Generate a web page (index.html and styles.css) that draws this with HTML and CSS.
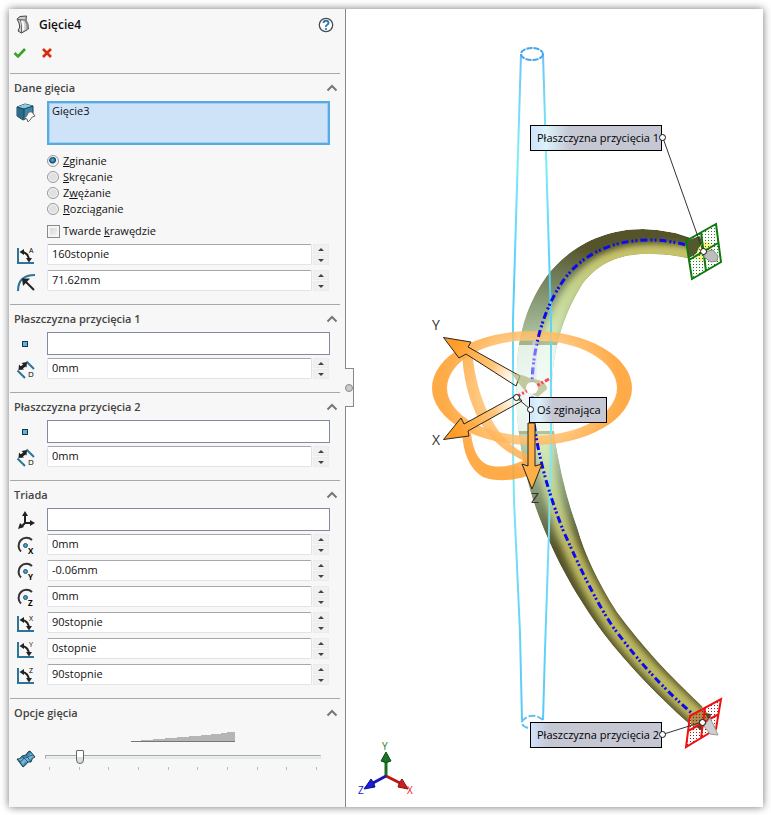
FILE: index.html
```html
<!DOCTYPE html>
<html lang="pl">
<head>
    <meta charset="UTF-8">
    <meta name="viewport" content="width=device-width, initial-scale=1.0">
    <title>Gięcie4</title>
    <link rel="stylesheet" href="styles.css">
</head>
<body>

<!-- Shared icons -->
<svg class="sprite" aria-hidden="true">
    <symbol id="chevron" viewBox="0 0 12 8">
        <path d="M1.500 6.500 6 2l4.500 4.500" fill="none" stroke="#777" stroke-width="2"/>
    </symbol>
    <symbol id="angle" viewBox="0 0 20 20">
        <path d="M2 3v15h16" fill="none" stroke="#2d7596" stroke-width="2"/>
        <path d="M6 7q7 1 7 9" fill="none" stroke="#222" stroke-width="2"/>
        <path d="M3.500 7 8 4v6zM10 13h6l-3 4.500z" fill="#222"/>
    </symbol>
    <symbol id="point" viewBox="0 0 20 20">
        <rect x="6.500" y="7.500" width="5" height="5" fill="#62b2dc" stroke="#123c56"/>
    </symbol>
    <symbol id="distance" viewBox="0 0 20 20">
        <path d="M10.500 2.500 18 10M1.500 11.500 9 19" stroke="#2d7596" stroke-width="2"/>
        <path d="M5 9 9 6" stroke="#222" stroke-width="3"/>
        <path d="M5.500 4 11 3l-.5 5.500zM3 5.500 2.500 11 8 10.500z" fill="#222"/>
    </symbol>
    <symbol id="center" viewBox="0 0 20 20">
        <path d="M5 16.500A7.500 7.500 0 0 1 16 5" fill="none" stroke="#333" stroke-width="2"/>
        <circle cx="9.500" cy="10.500" r="2" fill="#4a9cc4" stroke="#1d5878"/>
    </symbol>
</svg>

<div class="window">
    <aside class="panel">
        <header class="panel-header">
            <div class="title-row">
                <svg class="title-icon" viewBox="0 0 18 20">
                    <path d="M2 4 5 1.500 11.500 1 11 5q2 3 2.500 9l-7 4-3.500-2q3-4 1-8z" fill="#ccc" stroke="#444"/>
                    <path d="M3 4.500 10 5M10 5q3 4 2.500 10M6.500 18V14q1-4-1-9" fill="none" stroke="#666"/>
                    <path d="M11.500 1q-1 4 2 8v5l-2 1q1-7-1.500-10z" fill="#888"/>
                    <path d="M6 6h2q2 3 1 9l-2 1q1-5-1-10z" fill="#fafafa"/>
                </svg>
                <h1>Gięcie4</h1>
                <button class="icon-button help" type="button" aria-label="Pomoc">
                    <svg width="16" height="16" viewBox="0 0 16 16">
                        <circle cx="8" cy="8" r="6.700" fill="#fff" stroke="#444d54" stroke-width="1.300"/>
                        <path d="M5.500 6q.2-2.200 2.500-2.200T10.500 6Q10.500 7.200 9 8T8 10" fill="none" stroke="#2d7ba5" stroke-width="1.900"/>
                        <circle cx="8" cy="12" r="1.100" fill="#2d7ba5"/>
                    </svg>
                </button>
            </div>
            <div class="actions">
                <button class="icon-button" type="button" aria-label="OK">
                    <svg width="14" height="12" viewBox="0 0 14 12"><path d="M1.500 6 5 9.500 12 2" fill="none" stroke="#3ba226" stroke-width="2.600"/></svg>
                </button>
                <button class="icon-button" type="button" aria-label="Anuluj">
                    <svg width="14" height="12" viewBox="0 0 14 12"><path d="m3 2 8 8M11 2 3 10" stroke="#dc2a0c" stroke-width="2.600"/></svg>
                </button>
            </div>
        </header>

        <section class="section">
            <h2>Dane gięcia <svg class="chevron"><use href="#chevron"/></svg></h2>
            <div class="row">
                <label for="bodies" aria-label="Obiekty do gięcia">
                    <svg class="icon" viewBox="0 0 20 20">
                        <path d="M1 4 9 1l8 2v9l-10 5-6-4z" fill="#3b87a8" stroke="#174257"/>
                        <path d="M1 4 9 1l8 2-9 3z" fill="#8ec9e0"/>
                        <path d="M1 4 8 6v11l-7-4z" fill="#2c6c8b"/>
                        <path d="M1 4 8 6l9-3M8 6v10" fill="none" stroke="#174257"/>
                        <path d="M8 15q3-1 4-5 2-2 4-1l3 4q-3 0-5 4l-2 2-1-3z" fill="#fafafa" stroke="#666"/>
                    </svg>
                </label>
                <textarea id="bodies" class="list selected" readonly>Gięcie3</textarea>
            </div>
            <div class="choices">
                <label><input type="radio" name="mode" checked><span><u>Z</u>ginanie</span></label>
                <label><input type="radio" name="mode"><span><u>S</u>kręcanie</span></label>
                <label><input type="radio" name="mode"><span>Z<u>w</u>ężanie</span></label>
                <label><input type="radio" name="mode"><span><u>R</u>ozciąganie</span></label>
                <label class="hard-edges"><input type="checkbox"><span>Twarde <u>k</u>rawędzie</span></label>
            </div>
            <div class="row">
                <label for="angle-a" aria-label="Kąt">
                    <svg class="icon" viewBox="0 0 20 20"><use href="#angle"/><text x="13" y="8">A</text></svg>
                </label>
                <div class="spinner">
                    <input id="angle-a" type="text" value="160stopnie">
                    <div class="steps"><button type="button" class="up" aria-label="Więcej"></button><button type="button" class="down" aria-label="Mniej"></button></div>
                </div>
            </div>
            <div class="row">
                <label for="radius" aria-label="Promień">
                    <svg class="icon" viewBox="0 0 20 20">
                        <path d="M2 20Q2 4 19 4" fill="none" stroke="#2d7596" stroke-width="2"/>
                        <path d="M18 19 10 11" stroke="#222" stroke-width="2"/>
                        <path d="M6 7.500h8L7 15z" fill="#222"/>
                    </svg>
                </label>
                <div class="spinner">
                    <input id="radius" type="text" value="71.62mm">
                    <div class="steps"><button type="button" class="up" aria-label="Więcej"></button><button type="button" class="down" aria-label="Mniej"></button></div>
                </div>
            </div>
        </section>

        <section class="section">
            <h2>Płaszczyzna przycięcia 1 <svg class="chevron"><use href="#chevron"/></svg></h2>
            <div class="row">
                <label for="plane1" aria-label="Obiekt płaszczyzny 1"><svg class="icon"><use href="#point"/></svg></label>
                <input id="plane1" class="list" type="text">
            </div>
            <div class="row">
                <label for="distance1" aria-label="Odległość 1">
                    <svg class="icon" viewBox="0 0 20 20"><use href="#distance"/><text class="letter" x="12" y="18">D</text></svg>
                </label>
                <div class="spinner">
                    <input id="distance1" type="text" value="0mm">
                    <div class="steps"><button type="button" class="up" aria-label="Więcej"></button><button type="button" class="down" aria-label="Mniej"></button></div>
                </div>
            </div>
        </section>

        <section class="section">
            <h2>Płaszczyzna przycięcia 2 <svg class="chevron"><use href="#chevron"/></svg></h2>
            <div class="row">
                <label for="plane2" aria-label="Obiekt płaszczyzny 2"><svg class="icon"><use href="#point"/></svg></label>
                <input id="plane2" class="list" type="text">
            </div>
            <div class="row">
                <label for="distance2" aria-label="Odległość 2">
                    <svg class="icon" viewBox="0 0 20 20"><use href="#distance"/><text class="letter" x="12" y="18">D</text></svg>
                </label>
                <div class="spinner">
                    <input id="distance2" type="text" value="0mm">
                    <div class="steps"><button type="button" class="up" aria-label="Więcej"></button><button type="button" class="down" aria-label="Mniej"></button></div>
                </div>
            </div>
        </section>

        <section class="section">
            <h2>Triada <svg class="chevron"><use href="#chevron"/></svg></h2>
            <div class="row">
                <label for="triad" aria-label="Układ współrzędnych">
                    <svg class="icon" viewBox="0 0 20 20">
                        <path d="M9 5v8h7M9 13l-4 4" fill="none" stroke="#222" stroke-width="2"/>
                        <path d="M9 1 12 6H6zM19 13l-5 3v-6zM2 19l2-6 4 4z" fill="#222"/>
                    </svg>
                </label>
                <input id="triad" class="list" type="text">
            </div>
            <div class="row">
                <label for="center-x" aria-label="Środek X">
                    <svg class="icon" viewBox="0 0 20 20"><use href="#center"/><text class="letter bold" x="12" y="19">X</text></svg>
                </label>
                <div class="spinner">
                    <input id="center-x" type="text" value="0mm">
                    <div class="steps"><button type="button" class="up" aria-label="Więcej"></button><button type="button" class="down" aria-label="Mniej"></button></div>
                </div>
            </div>
            <div class="row">
                <label for="center-y" aria-label="Środek Y">
                    <svg class="icon" viewBox="0 0 20 20"><use href="#center"/><text class="letter bold" x="12" y="19">Y</text></svg>
                </label>
                <div class="spinner">
                    <input id="center-y" type="text" value="-0.06mm">
                    <div class="steps"><button type="button" class="up" aria-label="Więcej"></button><button type="button" class="down" aria-label="Mniej"></button></div>
                </div>
            </div>
            <div class="row">
                <label for="center-z" aria-label="Środek Z">
                    <svg class="icon" viewBox="0 0 20 20"><use href="#center"/><text class="letter bold" x="12" y="19">Z</text></svg>
                </label>
                <div class="spinner">
                    <input id="center-z" type="text" value="0mm">
                    <div class="steps"><button type="button" class="up" aria-label="Więcej"></button><button type="button" class="down" aria-label="Mniej"></button></div>
                </div>
            </div>
            <div class="row">
                <label for="angle-x" aria-label="Kąt X">
                    <svg class="icon" viewBox="0 0 20 20"><use href="#angle"/><text x="13" y="8">X</text></svg>
                </label>
                <div class="spinner">
                    <input id="angle-x" type="text" value="90stopnie">
                    <div class="steps"><button type="button" class="up" aria-label="Więcej"></button><button type="button" class="down" aria-label="Mniej"></button></div>
                </div>
            </div>
            <div class="row">
                <label for="angle-y" aria-label="Kąt Y">
                    <svg class="icon" viewBox="0 0 20 20"><use href="#angle"/><text x="13" y="8">Y</text></svg>
                </label>
                <div class="spinner">
                    <input id="angle-y" type="text" value="0stopnie">
                    <div class="steps"><button type="button" class="up" aria-label="Więcej"></button><button type="button" class="down" aria-label="Mniej"></button></div>
                </div>
            </div>
            <div class="row">
                <label for="angle-z" aria-label="Kąt Z">
                    <svg class="icon" viewBox="0 0 20 20"><use href="#angle"/><text x="13" y="8">Z</text></svg>
                </label>
                <div class="spinner">
                    <input id="angle-z" type="text" value="90stopnie">
                    <div class="steps"><button type="button" class="up" aria-label="Więcej"></button><button type="button" class="down" aria-label="Mniej"></button></div>
                </div>
            </div>
        </section>

        <section class="section">
            <h2>Opcje gięcia <svg class="chevron"><use href="#chevron"/></svg></h2>
            <div class="row accuracy">
                <label for="accuracy" aria-label="Dokładność gięcia">
                    <svg class="icon" viewBox="0 0 20 20">
                        <path d="M1 10q3 1 5-3l4-1q2-4 4-4l5 6q-3 0-4 5l-3 0q-2 3-5 5z" fill="#3d88ab" stroke="#174257"/>
                        <path d="M3 10q4 0 5-2l4-1 3-3 3 4q-3 0-4 4l-5 1-2 3z" fill="#77b7d3"/>
                        <path d="M6 7l6 6M10 6l5 7M3 13q4-1 5-4l4-1q2-2 5-2" fill="none" stroke="#235d7c"/>
                    </svg>
                </label>
                <div class="slider">
                    <svg class="wedge" viewBox="0 0 104 11">
                        <path d="M10 10V9h12V8h12V7h12V6h12V5h12V4h10V3h10V2h6V1h8v9z" fill="#b5b5b5"/>
                        <path d="M0 10.500h104" stroke="#777"/>
                    </svg>
                    <input id="accuracy" type="range" min="0" max="9" value="1">
                    <div class="ticks"><i></i><i></i><i></i><i></i><i></i><i></i><i></i><i></i><i></i><i></i></div>
                </div>
            </div>
        </section>

        <button class="handle" type="button" aria-label="Zwiń panel"></button>
    </aside>

    <main class="viewport">
        <svg class="scene" viewBox="346 9 417 798">
            <defs>
                <path id="tube" d="M703 243Q672 229 643 229C600 229 566 250 546 277C528 303 519 330 517 365C516 395 516 405 518 425C522 465 530 495 543 527C562 573 582 604 603 633C630 668 660 698 688 723L703 707C668 674 642 646 617 612C598 582 585 555 577 527C567 500 560 470 555 440Q552 415 552 387C553 345 565 312 583 283C600 262 620 254 647 254Q672 253 703 262Z"/>
                <path id="axis" d="M703 251Q677 240 650 240C608 240 580 257 563 281C545 307 532 345 532 390C532 440 548 492 563 530C580 568 594 598 613 627C633 654 660 687 702 722"/>
                <clipPath id="tube-clip"><use href="#tube"/></clipPath>
                <filter id="soft" x="-20%" y="-20%" width="140%" height="140%"><feGaussianBlur stdDeviation="3"/></filter>
                <radialGradient id="haze" gradientUnits="userSpaceOnUse" cx="540" cy="395" r="155">
                    <stop offset="0" stop-color="#effcff"/>
                    <stop offset=".35" stop-color="#dcfbdc" stop-opacity=".7"/>
                    <stop offset=".7" stop-color="#c4f4d8" stop-opacity=".35"/>
                    <stop offset="1" stop-color="#b4e6d4" stop-opacity="0"/>
                </radialGradient>
                <radialGradient id="orange" gradientUnits="userSpaceOnUse" cx="532" cy="388" r="110">
                    <stop offset=".12" stop-color="#fff" stop-opacity=".2"/>
                    <stop offset=".4" stop-color="#ffc77b"/>
                    <stop offset=".8" stop-color="#ff9c28"/>
                </radialGradient>
                <linearGradient id="callout">
                    <stop offset="0" stop-color="#cfe2fd"/>
                    <stop offset=".12" stop-color="#dbf3fb"/>
                    <stop offset=".3" stop-color="#c5c7d3"/>
                </linearGradient>
                <linearGradient id="callout-far">
                    <stop offset="0" stop-color="#cfe2fd"/>
                    <stop offset=".15" stop-color="#c5c7d3"/>
                </linearGradient>
                <linearGradient id="cyan" x1="0" y1="0" x2="0" y2="1">
                    <stop offset="0" stop-color="#6bc3fa"/>
                    <stop offset=".15" stop-color="#7deef9"/>
                    <stop offset=".35" stop-color="#55ccfa"/>
                    <stop offset=".6" stop-color="#80e9f8"/>
                    <stop offset="1" stop-color="#58c9f8"/>
                </linearGradient>
                <pattern id="green-dots" width="3" height="3" patternUnits="userSpaceOnUse"><rect width="1" height="1" fill="#157d15"/></pattern>
                <pattern id="red-dots" width="3" height="3" patternUnits="userSpaceOnUse"><rect width="1" height="1" fill="#a01818"/></pattern>
            </defs>

            <!-- Bent tube -->
            <g clip-path="url(#tube-clip)">
                <use href="#tube" fill="#55532a"/>
                <g fill="none" filter="url(#soft)">
                    <path d="M703 258Q676 251 647 252C612 253 592 266 574 288C555 317 543 350 541 390C541 440 548 490 563 528" stroke="#c6c269" stroke-width="16"/>
                    <path d="M538 400C540 440 549 490 563 530C577 566 592 594 612 624C632 652 662 684 700 718" stroke="#bdb960" stroke-width="16"/>
                </g>
                <rect x="480" y="235" width="215" height="320" fill="url(#haze)"/>
                <path d="M500 345h70v86h-70z" fill="#f4fcfa" fill-opacity=".75"/>
                <path d="M500 341h70v4h-70zM500 431h70v3h-70z" fill="#9da574" fill-opacity=".6"/>
            </g>

            <!-- Original straight tube -->
            <g fill="none" stroke="url(#cyan)" stroke-width="2">
                <path d="M521 54 519 120 513 320V450L514 500 520 633 522 720"/>
                <path d="M543 54 545 120 551 320V450L549 530 545 650 543 720"/>
                <ellipse cx="532" cy="54" rx="11" ry="6" stroke="#48a5ed" stroke-dasharray="6 1"/>
                <path d="M528 728Q521 726 522 721Q532 711 543 720" stroke="#62bff0" stroke-dasharray="7 2"/>
            </g>

            <!-- Rotation rings -->
            <g fill="url(#orange)" fill-opacity=".85">
                <path fill-rule="evenodd" d="M432 388a100 57 0 1 0 200 0a100 57 0 1 0-200 0zM447 388a85 48 0 1 0 170 0a85 48 0 1 0-170 0z"/>
                <path d="M462 350l10-3c2 38 15 70 30 88q12 14 26 20v8c-18-9-36-19-49-43q-16-31-17-70z"/>
                <path d="M462 430l9 3q3 30 21 33c12 2 24-1 35-8v18c-15 5-31 6-44 1q-20-12-21-47z"/>
            </g>
            <use href="#axis" fill="none" stroke="#0b0bf0" stroke-width="3" stroke-dasharray="7 3 2 2 2 3"/>
            <path d="M535 341 532 430" stroke="#dedcff" stroke-width="5" stroke-opacity=".5"/>

            <g fill="url(#orange)" stroke="#29251c" stroke-linejoin="miter">
                <path d="M443.500 337.500 471 342l-3 5 52 29-4 10-50-32-7 4z"/>
                <path d="M443.500 439.500 461 418l3 6 53-29 5 6-54 30 1 5z"/>
                <path d="M528 423v43l-6-2 10 25 10-25-7 2v-43z" fill="#ffaf47"/>
            </g>
            <path d="M511 373q15 2 20 6 15 0 16 10l-9 8-14-7z" fill="#b4ba83" fill-opacity=".75"/>
            <path d="M516 397 549 379" stroke="#ff435c" stroke-width="3" stroke-dasharray="5 2 2 2"/>
            <circle cx="532" cy="388" r="6" fill="#fff"/>

            <!-- Trim planes -->
            <g stroke="#0e790e" stroke-width="2">
                <path d="M716 224 721 262 692 279 686 241Z" fill="#fff" fill-opacity=".8" stroke="none"/>
                <path d="M686 241 700 236 704 249 689 258Z" fill="#5a5430" stroke="none"/>
                <path d="M697 252q5-14 13-9l2 6-5 5-4 8-8-6z" fill="#f8f28f" stroke="none"/>
                <path d="M716 224 721 262 692 279 686 241ZM701 232 706 271M689 260 718 243" fill="url(#green-dots)"/>
                <path d="M704 252l9-2 5 6-1 5-6 1-7-5z" fill="#bdbdbd" stroke="#888" stroke-width="1"/>
            </g>
            <g stroke="#f01010" stroke-width="2">
                <path d="M721 699 716 729 686 747 690 716Z" fill="#fff" fill-opacity=".8" stroke="none"/>
                <path d="M691 716 704 708 710 718 702 729 691 725Z" fill="#a98f4c" stroke="none"/>
                <path d="M705 713l6 1-1 9zM695 726l7-1 0 6z" fill="#55482a" stroke="none"/>
                <path d="M721 699 716 729 686 747 690 716ZM705 708 701 738M688 731 719 714" fill="url(#red-dots)"/>
                <path d="M704 726l6-8 4 8 4 9-8-1z" fill="#cfcfcf" stroke="#999" stroke-width="1"/>
            </g>

            <!-- Callouts -->
            <g fill="none" stroke="#333">
                <path d="M663 138 703 251M664 734 702 722M517 398 530 409"/>
            </g>
            <g class="callouts">
                <rect x="530.500" y="125.500" width="131" height="25"/>
                <text x="537" y="142">Płaszczyzna przycięcia 1</text>
                <rect class="far" x="530.500" y="722.500" width="131" height="25"/>
                <text x="537" y="739">Płaszczyzna przycięcia 2</text>
                <rect x="529.500" y="397.500" width="77" height="25"/>
                <text x="537" y="414">Oś zginająca</text>
            </g>
            <g fill="#fff" stroke="#111">
                <circle cx="662.500" cy="137.500" r="3"/><circle cx="703.500" cy="251.500" r="3"/>
                <circle cx="662.500" cy="734.500" r="3"/><circle cx="702.500" cy="722.500" r="3"/>
                <circle cx="516.500" cy="397.500" r="3"/><circle cx="530.500" cy="409.500" r="3"/>
            </g>
            <g class="axis-names">
                <text x="432" y="330">Y</text>
                <text x="432" y="445">X</text>
                <text x="531" y="503">Z</text>
            </g>

            <!-- Orientation triad -->
            <g stroke-width="3">
                <path d="M386 776V761" stroke="#176f24"/>
                <path d="M386 776 400 783" stroke="#bd1717"/>
                <path d="M386 776 373 783" stroke="#1616b9"/>
            </g>
            <path d="M386 752l5 9q-5 3-10 0z" fill="#197526" stroke="#114b19"/>
            <path d="M408 789l-6-10q-3 3-4 8z" fill="#d01d1d" stroke="#811414"/>
            <path d="M364 789l7-10q3 3 4 8z" fill="#1c1cd8" stroke="#111180"/>
            <g class="triad-names">
                <text x="382" y="750" fill="#148514">Y</text>
                <text x="407" y="794" fill="#f31313">X</text>
                <text x="358" y="794" fill="#1717df">Z</text>
            </g>
        </svg>
    </main>
</div>

</body>
</html>
```
FILE: styles.css
```css
* {
    box-sizing: border-box;
}
body {
    margin: 0;
    padding: 9px 8px 8px 9px;
    background: #fff;
    color: #111;
    font-family: "Open Sans", "Noto Sans", sans-serif;
    font-size: 11px;
    line-height: 16px;
}
h1, h2 {
    margin: 0;
}
button {
    padding: 0;
    border: none;
    background: none;
}
.sprite {
    position: absolute;
    width: 0;
    height: 0;
}
.window {
    display: grid;
    grid-template-columns: minmax(280px, 337px) 1fr;
    min-height: calc(100vh - 17px);
    background: #fff;
    box-shadow: 0 0 8px rgba(0, 0, 0, 0.55);
}

/* Property panel */
.panel {
    position: relative;
    padding: 0 5px 0 1px;
    background: #f7f7f7;
    border-right: 1px solid #888;
}
.panel-header {
    height: 64px;
    padding: 6px 6px 0 5px;
}
.title-row {
    display: flex;
    align-items: center;
    height: 20px;
}
.title-icon {
    width: 18px;
    height: 20px;
}
h1 {
    flex: 1;
    margin-left: 6px;
    font-size: 12px;
    font-weight: 600;
}
.icon-button {
    display: flex;
}
.actions {
    display: flex;
    gap: 13px;
    padding-top: 12px;
    margin-left: -2px;
}
.section {
    padding-bottom: 13px;
    border-top: 1px solid #a8a8a8;
}
h2 {
    display: flex;
    align-items: center;
    justify-content: space-between;
    height: 27px;
    padding: 0 2px 0 4px;
    color: #444;
    font-size: 11px;
    font-weight: 600;
}
.chevron {
    width: 12px;
    height: 8px;
}
.row {
    display: grid;
    grid-template-columns: 31px 1fr;
    align-items: center;
    padding: 0 10px 0 6px;
}
.row + .row {
    margin-top: 5px;
}
h2 + .row + .row {
    margin-top: 3px;
}
.icon {
    display: block;
    width: 20px;
    height: 20px;
    font-size: 7px;
}
.letter {
    font-size: 8px;
}
.bold {
    font-weight: 700;
}
textarea, input[type="text"] {
    display: block;
    width: 100%;
    min-width: 0;
    margin: 0;
    color: #111;
    font: inherit;
    outline: none;
}
.row .list {
    height: 23px;
    padding: 2px 4px;
    border: 1px solid #828a9e;
    background: #fff;
}
.row .list.selected {
    height: 44px;
    padding: 0 3px;
    border: 2px solid #55ace0;
    background: #cfe3f8;
    box-shadow: inset 0 0 0 1px #a5cdf1;
    resize: none;
    overflow: hidden;
}
.row:has(.selected) {
    align-items: start;
}
.row:has(.selected) .icon {
    margin-top: 2px;
}
.choices {
    display: flex;
    flex-direction: column;
    padding: 8px 0 5px 37px;
}
.choices label {
    display: flex;
    align-items: center;
    gap: 4px;
    height: 16px;
}
.choices .hard-edges {
    margin-top: 6px;
    gap: 3px;
}
input[type="radio"], input[type="checkbox"] {
    appearance: none;
    flex: none;
    width: 12px;
    height: 12px;
    margin: 0;
    border: 1px solid #999;
    border-radius: 50%;
    background: #e0e0e0;
    box-shadow: inset 0 0 0 1px #f8f8f8;
}
input[type="checkbox"] {
    width: 13px;
    height: 13px;
    border-color: #8a8a8a;
    border-radius: 0;
    background: linear-gradient(135deg, #ccd0d6, #f8f8f8);
    box-shadow: inset 0 0 0 2px #f5f5f5;
}
input[type="radio"]:checked {
    background: radial-gradient(circle at 45% 40%, #5cc1ec 0, #0c466b 3px, #eee 4px);
}
.spinner {
    display: grid;
    grid-template-columns: 1fr 16px;
    gap: 1px;
    height: 21px;
    padding-right: 1px;
}
.spinner input {
    height: 21px;
    padding: 0 4px 2px;
    border: 1px solid #e2e3ea;
    border-top-color: #a5a7aa;
    border-radius: 2px;
    background: #fff;
}
.steps {
    display: grid;
    grid-template-rows: 1fr 1fr;
    gap: 1px;
}
.steps button {
    display: flex;
    align-items: center;
    justify-content: center;
    border: 1px solid #ebebeb;
    background: #f0f0f0;
}
.steps button::before {
    content: "";
    border: 3px solid transparent;
}
.steps .up::before {
    border-top: none;
    border-bottom: 3px solid #444;
}
.steps .down::before {
    border-bottom: none;
    border-top: 3px solid #444;
}

/* Accuracy slider */
.slider {
    margin: 5px 9px 0 -2px;
}
.wedge {
    display: block;
    width: 104px;
    height: 11px;
    margin: 0 auto;
}
input[type="range"] {
    appearance: none;
    display: block;
    width: 100%;
    height: 14px;
    margin: 8px 0 3px;
    background: none;
}
input[type="range"]::-webkit-slider-runnable-track {
    height: 4px;
    border: 1px solid #dfe6e3;
    border-top-color: #aaa;
    border-left-color: #aaa;
    background: #e6eeea;
}
input[type="range"]::-webkit-slider-thumb {
    appearance: none;
    width: 8px;
    height: 14px;
    margin-top: -6px;
    border: 1px solid #666;
    border-radius: 1px 1px 4px 4px;
    background: linear-gradient(#fff 50%, #ddd 50%);
}
.ticks {
    display: flex;
    justify-content: space-between;
    padding: 0 4px;
}
.ticks i {
    width: 1px;
    height: 3px;
    background: #bbb;
}
.accuracy label {
    padding-top: 22px;
}
.handle {
    position: absolute;
    top: 45%;
    right: -9px;
    width: 9px;
    height: 39px;
    border: 1px solid #888;
    border-left: none;
    background: #f7f7f7;
}
.handle::before {
    content: "";
    display: block;
    width: 6px;
    height: 6px;
    margin: 0 auto;
    border: 1px solid #888;
    border-radius: 50%;
    background: #ccc;
}

/* Model view */
.viewport {
    display: flex;
    min-width: 0;
}
.scene {
    width: 100%;
    height: auto;
}
.callouts rect {
    fill: url(#callout);
    stroke: #000;
}
.callouts .far {
    fill: url(#callout-far);
}
.callouts text {
    font-size: 11px;
}
.axis-names {
    font-size: 14px;
    fill: #333;
}
.triad-names {
    font-size: 10px;
}
```
